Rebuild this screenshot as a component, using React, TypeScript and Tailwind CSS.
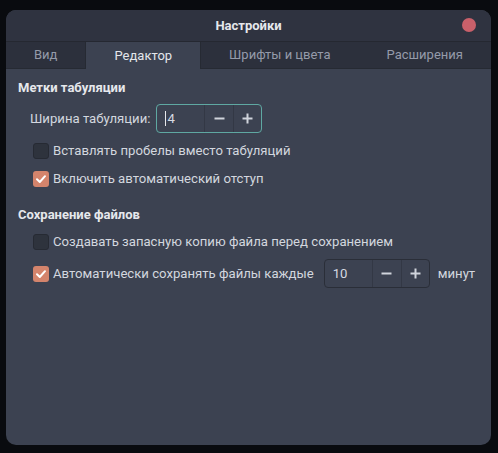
const font = { fontFamily: 'Roboto, "Noto Sans", sans-serif' }

const Check = () => (
  <svg width="12" height="12" viewBox="0 0 12 12" fill="none">
    <path d="M2 6.3 L4.8 9 L10 3.2" stroke="white" strokeWidth="2" strokeLinecap="round" strokeLinejoin="round" />
  </svg>
)

const Box = ({ checked }: { checked?: boolean }) =>
  checked ? (
    <span className="flex h-4 w-4 shrink-0 items-center justify-center rounded-[3px] bg-[#d4846c]">
      <Check />
    </span>
  ) : (
    <span className="h-4 w-4 shrink-0 rounded-[3px] border border-[#262a33] bg-[#2e333d]" />
  )

const Minus = () => (
  <svg width="11" height="11" viewBox="0 0 11 11">
    <path d="M0.5 5.5 H10.5" stroke="#d0d4dc" strokeWidth="2" />
  </svg>
)

const Plus = () => (
  <svg width="11" height="11" viewBox="0 0 11 11">
    <path d="M0.5 5.5 H10.5 M5.5 0.5 V10.5" stroke="#d0d4dc" strokeWidth="2" />
  </svg>
)

const Spin = ({ value, focused }: { value: string; focused?: boolean }) => (
  <div
    className={`flex h-[29px] w-[106px] shrink-0 rounded-[4px] border ${
      focused ? 'border-[#5fa8a2]' : 'border-[#2a2e38]'
    }`}
  >
    <div className="flex w-[47px] items-center pl-2 text-[13.15px] text-[#d6dae2]">
      {focused && <span className="mr-[1px] h-[15px] w-px bg-[#e5e7eb]" />}
      {value}
    </div>
    <div className="flex w-[29px] items-center justify-center border-l border-[#333845]">
      <Minus />
    </div>
    <div className="flex flex-1 items-center justify-center border-l border-[#333845]">
      <Plus />
    </div>
  </div>
)

const CheckRow = ({ checked, label, className = '' }: { checked?: boolean; label: string; className?: string }) => (
  <div className={`flex h-5 items-center gap-1 pl-[15px] ${className}`}>
    <Box checked={checked} />
    <span className="whitespace-nowrap text-[13.15px] text-[#d3d7df]">{label}</span>
  </div>
)

const tabs = ['Вид', 'Редактор', 'Шрифты и цвета', 'Расширения']

export default function App() {
  return (
    <div className="h-[453px] w-[498px] bg-[#090b0f] pb-[8px] pl-[6px] pr-[7px] pt-[10px]" style={font}>
      <div className="flex h-full flex-col overflow-hidden rounded-[10px] bg-[#3c4251]">
        {/* Title bar */}
        <div className="relative flex h-[32px] items-center justify-center border-b border-[#252831] bg-[#2f3340]">
          <span className="text-[13px] font-bold text-[#e6e8ec]">Настройки</span>
          <span className="absolute right-[15px] top-[8px] h-[14px] w-[14px] rounded-full bg-[#c9606a]" />
        </div>

        {/* Tabs */}
        <div className="flex h-[27px] bg-[#2c303c]">
          {tabs.map((t, i) =>
            i === 1 ? (
              <div
                key={t}
                className="flex items-center border-x border-[#262a33] bg-[#3c4251] px-7 text-[13px] text-[#e3e6eb]"
              >
                {t}
              </div>
            ) : (
              <div
                key={t}
                className={`flex items-center border-b border-[#262a33] text-[13px] text-[#959baa] ${
                  i === 3 ? 'flex-1 justify-center' : 'px-7'
                }`}
              >
                {t}
              </div>
            )
          )}
        </div>

        {/* Content */}
        <div className="flex flex-col px-3 pt-[10px]">
          <div className="flex h-[18px] items-center text-[13px] font-bold text-[#e6e8ec]">Метки табуляции</div>

          <div className="mt-[7px] flex items-center gap-[6px] pl-[12px]">
            <span className="whitespace-nowrap text-[13.15px] text-[#d3d7df]">Ширина табуляции:</span>
            <Spin value="4" focused />
          </div>

          <CheckRow label="Вставлять пробелы вместо табуляций" className="mt-[8px]" />
          <CheckRow checked label="Включить автоматический отступ" className="mt-[8px]" />

          <div className="mt-[17px] flex h-[18px] items-center text-[13px] font-bold text-[#e6e8ec]">
            Сохранение файлов
          </div>

          <CheckRow label="Создавать запасную копию файла перед сохранением" className="mt-[8px]" />

          <div className="mt-[7px] flex items-center pl-[15px]">
            <Box checked />
            <span className="ml-1 whitespace-nowrap text-[13.15px] text-[#d3d7df]">
              Автоматически сохранять файлы каждые
            </span>
            <span className="ml-[10px]">
              <Spin value="10" />
            </span>
            <span className="ml-2 whitespace-nowrap text-[13.15px] text-[#d3d7df]">минут</span>
          </div>
        </div>
      </div>
    </div>
  )
}
